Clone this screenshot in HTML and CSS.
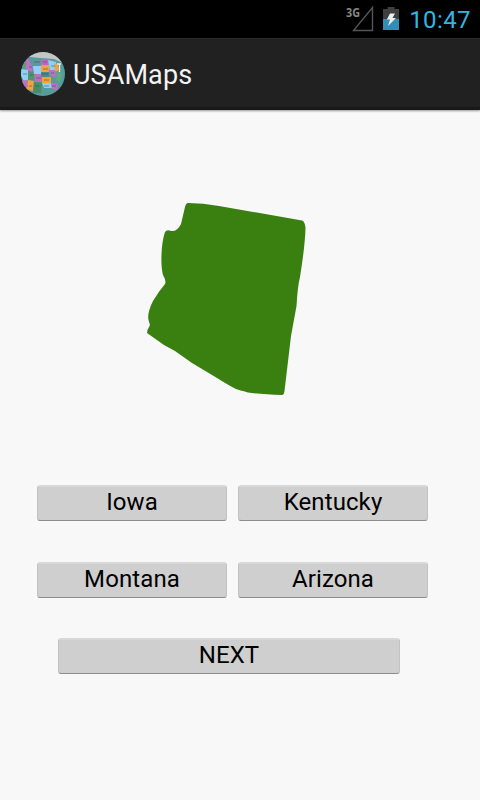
FILE: index.html
```html
<!DOCTYPE html>
<html lang="en">
<head>
<meta charset="UTF-8">
<meta name="viewport" content="width=device-width, initial-scale=1.0">
<title>USAMaps</title>
<link rel="stylesheet" href="styles.css">
</head>
<body>
<div class="status-bar">
    <svg class="signal" width="30" height="28" viewBox="0 0 30 28">
        <text class="network" x="1" y="13" textLength="14" lengthAdjust="spacingAndGlyphs">3G</text>
        <path d="M27.500 3.500V26.500H8.500Z" fill="none" stroke="#555" stroke-width="1.4"/>
    </svg>
    <svg class="battery" width="16" height="24" viewBox="0 0 16 24">
        <path d="M4.500 0h7v2H16v10H0V2h4.500z" fill="#3f3f3f"/>
        <path d="M0 12h16v11H0z" fill="#308fb5"/>
        <path d="M7 6.500h5L9.500 11H13L5 19l2-6.500H3.800z" fill="#eee"/>
    </svg>
    <span class="clock">10:47</span>
</div>
<header class="action-bar">
    <svg class="logo" width="44" height="44" viewBox="0 0 44 44">
        <clipPath id="round"><circle cx="22" cy="22" r="22"/></clipPath>
        <g clip-path="url(#round)">
            <rect width="44" height="44" fill="#589b9b"/>
            <path d="M0 0h44v12L33 7 20 6 8 5 0 9z" fill="#c4c5c5"/>
            <path d="M0 8l5 1 2 9-6 2z" fill="#5b9d7c"/>
            <path d="M5 6l3 1 2 6 2 1-1 6-6-2z" fill="#bd70c4"/>
            <path d="M8 5l12 2v7h-9z" fill="#589b9b"/>
            <path d="M20 7l8 1 0 6h-8z" fill="#b96ac0"/>
            <path d="M27 8l8 2 2 9-8 1z" fill="#91cff5"/>
            <path d="M0 17l7 1 1 10-5 1-3-5z" fill="#91cff5"/>
            <path d="M7 19l6 1v9l-6-1z" fill="#519478"/>
            <path d="M12 14h8v8h-7z" fill="#91cff5"/>
            <path d="M20 13h8v7h-8z" fill="#f2a23d"/>
            <path d="M14 22h7v8h-7z" fill="#c36dc0"/>
            <path d="M20 20h8v5h-8z" fill="#4b8c80"/>
            <path d="M28 18h6l1 7-5-1z" fill="#bd70c4"/>
            <path d="M21 25h9v6h-9z" fill="#f2a23d"/>
            <path d="M7 28l6 1-1 10-7-2z" fill="#f2a23d"/>
            <path d="M13 30l8 1-1 10h-8z" fill="#4a8c68"/>
            <path d="M21 31h9l1 5h-8z" fill="#91cff5"/>
            <path d="M30 31l7 1-1 6-5-1z" fill="#c36dc0"/>
            <path d="M36 18l5 4-2 8-4-2z" fill="#63a882"/>
            <path d="M33 11l4 2 1 5-4 1z" fill="#f2a23d"/>
            <path d="M0 29l6-1 1 7-5 1z" fill="#bd70c4"/>
            <path d="M36 12h4M38.500 12v8" fill="none" stroke="#e7eeee" stroke-width="1.300"/>
            <path d="M13 10h6M22 10h4M8 15h3M2 22h4M9 23h3M22 17h5M15 26h5M21 22h6M30 21h3M23 28h5M8 34h3M14 34h4M23 34h5M31 34h4M30 14h4" stroke="#34474c" stroke-width="1" opacity=".5"/>
        </g>
    </svg>
    <h1>USAMaps</h1>
</header>
<main class="quiz">
    <svg class="state" width="162" height="196" viewBox="146 201 162 196">
        <path d="M188 203Q203 203 219 206L302 220.500Q305 221.500 305.500 228Q305 246 300 277Q297.500 287 296.500 306L291 336L284.500 391Q284 395 282 395Q262 394.500 248 392.500L244 391.300Q241 390.800 236 389Q228 385 217 378L192 363L175 351L164 345L147 333L147.500 330L150 325L148.500 320Q147 313 153 301Q159 291 165 284Q166.500 281 163 275Q161 268 161.500 254Q162 241 165 232Q167 229 171 231Q177 232 181 224L185 207Q186 203 188 203Z" fill="#398011"/>
    </svg>
    <div class="answers">
        <button class="btn">Iowa</button>
        <button class="btn">Kentucky</button>
        <button class="btn">Montana</button>
        <button class="btn">Arizona</button>
    </div>
    <button class="btn next">NEXT</button>
</main>
</body>
</html>
```
FILE: styles.css
```css
body {
    margin: 0;
    height: 800px;
    display: flex;
    flex-direction: column;
    font-family: Roboto, sans-serif;
    background-color: #f8f8f8;
    overflow: hidden;
}

.status-bar {
    box-sizing: border-box;
    height: 38px;
    padding-right: 9px;
    display: flex;
    justify-content: flex-end;
    align-items: center;
    background-color: #000;
}

.signal {
    margin-right: 8px;
    margin-bottom: 3px;
}

.network {
    font-family: "Open Sans", sans-serif;
    font-size: 12.5px;
    font-weight: bold;
    fill: #868686;
}

.battery {
    margin-right: 10px;
    margin-bottom: 1px;
}

.clock {
    color: #33b5e5;
    font-size: 24px;
    line-height: 38px;
    letter-spacing: 0.4px;
    padding-top: 1px;
}

.action-bar {
    box-sizing: border-box;
    height: 72px;
    padding-left: 21px;
    display: flex;
    align-items: center;
    gap: 8px;
    background-color: #212121;
    border-top: 1px solid #2b2b2b;
    border-bottom: 3px solid #191919;
    box-shadow: 0 1px 2px rgba(0, 0, 0, 0.4);
}

.logo {
    margin-top: 2px;
}

.action-bar h1 {
    margin: 4px 0 0;
    color: #f3f3f3;
    font-size: 27px;
    font-weight: normal;
    letter-spacing: 0.1px;
}

.quiz {
    flex: 1;
    display: flex;
    flex-direction: column;
}

.state {
    margin: 91px 0 0 146px;
}

.answers {
    display: grid;
    grid-template-columns: 190px 190px;
    column-gap: 11px;
    row-gap: 41px;
    margin: 88px 0 0 37px;
}

.btn {
    box-sizing: border-box;
    height: 36px;
    padding: 0 0 3px;
    border: 1px solid #c2c2c2;
    border-top: 2px solid #d8d8d8;
    border-bottom-color: #8d8d8d;
    border-radius: 3px;
    background-color: #cfcfcf;
    color: #000;
    font-family: Roboto, sans-serif;
    font-size: 24px;
    line-height: 30px;
    letter-spacing: 0.1px;
}

.next {
    width: 342px;
    margin: 40px 0 0 58px;
}
```
